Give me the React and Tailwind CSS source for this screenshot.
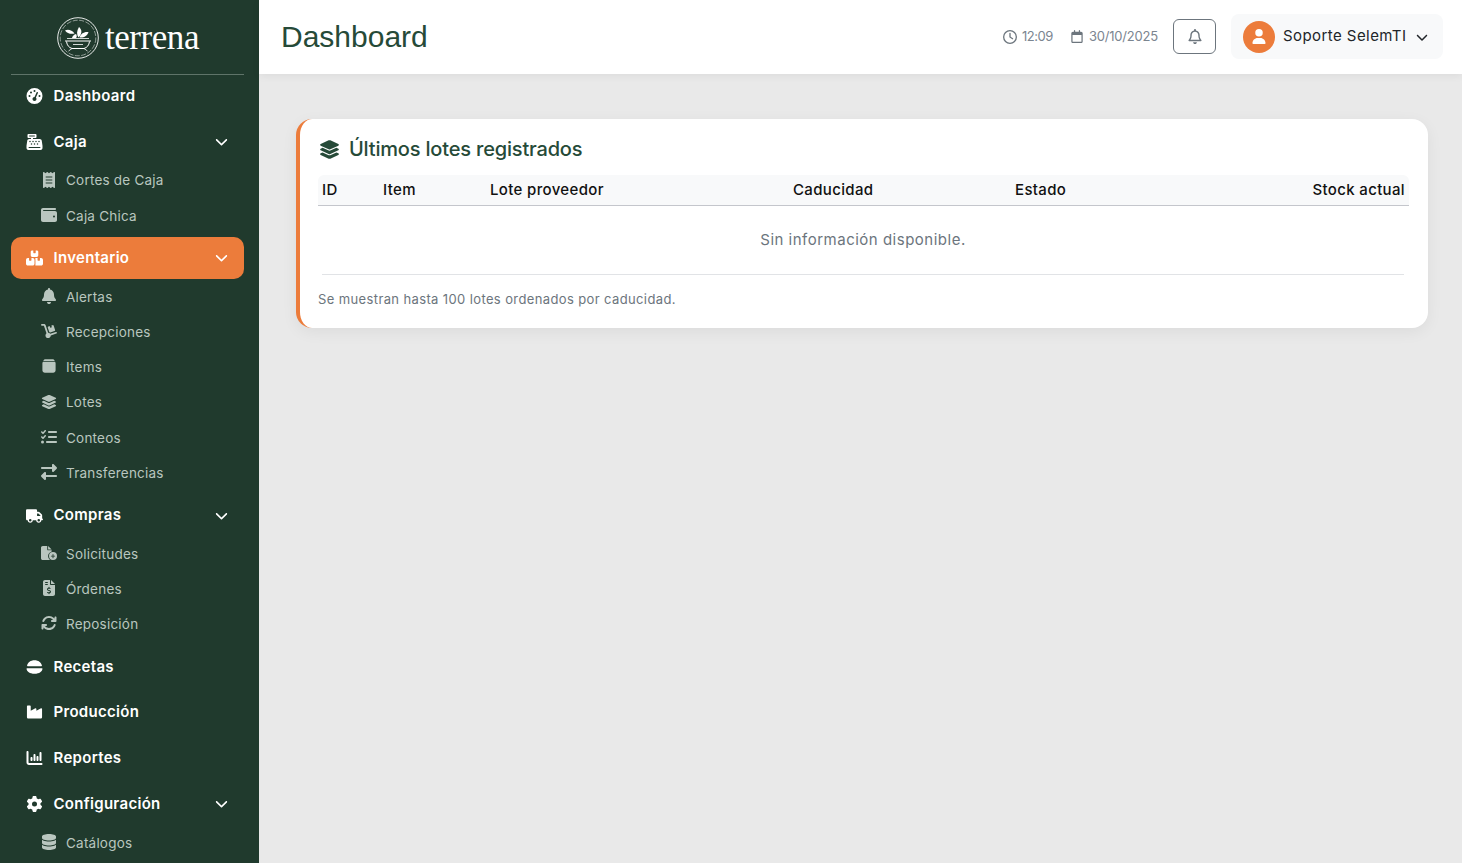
import React from "react";
import {
  FaGaugeHigh, FaCashRegister, FaReceipt, FaWallet, FaBoxesStacked, FaBell, FaDolly,
  FaLayerGroup, FaListCheck, FaRightLeft, FaTruck, FaFileCirclePlus, FaFileInvoiceDollar,
  FaArrowsRotate, FaIndustry, FaChartColumn, FaGear, FaDatabase, FaRegClock, FaRegCalendar,
  FaRegBell, FaChevronDown, FaUser,
} from "react-icons/fa6";

const Burger = ({ className }) => (
  <svg viewBox="0 0 16 14" className={className} fill="currentColor">
    <path d="M1 5.600C1.600 2.600 4.400.6 8 .6s6.400 2 7 5c.1.4-.2.7-.6.7H1.600c-.4 0-.7-.3-.6-.7Z" />
    <path d="M1 8.200h14c.3 0 .5.200.5.500-.3 2.600-2.800 4.700-7.500 4.700S.800 11.300.500 8.700c0-.3.200-.5.500-.5Z" />
  </svg>
);

const Jar = ({ className }) => (
  <svg viewBox="0 0 16 16" className={className} fill="currentColor">
    <path d="M4.500 1.200h7c.9 0 1.600.5 2 1.200l.2.600H2.300l.2-.6c.4-.7 1.100-1.200 2-1.200Z" />
    <path d="M2 3.700h12c.4.400.6 1 .6 1.600v7c0 1.400-1.100 2.500-2.500 2.500H3.900c-1.400 0-2.500-1.100-2.500-2.500v-7c0-.6.200-1.200.6-1.600Z" />
  </svg>
);

const Logo = () => (
  <svg viewBox="0 0 42 42" className="w-[42px] h-[42px] text-white" fill="none" stroke="currentColor">
    <circle cx="21" cy="21" r="20.300" strokeWidth="0.900" />
    <circle cx="21" cy="21" r="17.800" strokeWidth="0.500" strokeDasharray="5 1.500" />
    <path d="M8 24h26M9.500 24.500c.5 4 2.500 6 5.500 7h12c3-1 5-3 5.500-7" strokeWidth="1" />
    <path d="M10 21.500h22M15 31.500l-3.500 2.500M27 31.500l3.500 2.500M16 27.500h10" strokeWidth="0.800" />
    <path d="M8 13.500c3-1.500 7-.5 9.500 3 -3 .8-7.500.3-9.500-3Z" fill="currentColor" stroke="none" />
    <path d="M21.500 20.500c-2-3-2-6.500.5-10.500 3 2.500 3.500 6.500-.5 10.500Z" fill="currentColor" stroke="none" />
    <path d="M22.500 20.500c1-3.500 4-6 9-5.500-1 3.500-4.500 6-9 5.500Z" fill="currentColor" stroke="none" />
    <path d="M15 21c.5-2 2-3.500 4-4 1 1.500 1 3 0 4Z" fill="currentColor" stroke="none" />
  </svg>
);

const Main = ({ icon: Icon, label, active, chevron }) => (
  <div className={`h-[42px] ml-[11px] mr-[15px] pl-[15px] pr-[15px] flex items-center rounded-[10px] ${active ? "bg-[#ec7c3b]" : ""}`}>
    <Icon className="w-[17px] h-[16px] shrink-0 text-white" />
    <span className="ml-[10.500px] text-[15px] font-semibold tracking-[0.300px] text-white">{label}</span>
    {chevron && <FaChevronDown className="ml-auto mr-[1.500px] mb-[1px] w-[13px] h-[13px] text-white" />}
  </div>
);

const Sub = ({ icon: Icon, label }) => (
  <div className="h-[35.200px] pl-[41px] flex items-center text-[#b9c6bf]">
    <span className="w-[16px] mb-[2px] flex justify-center shrink-0"><Icon className="w-[16px] h-[16px]" /></span>
    <span className="ml-[9px] text-[13.500px] tracking-[0.220px]">{label}</span>
  </div>
);

const Group = ({ children, tight }) => <div className={tight ? "mb-[3px]" : "mb-1"}>{children}</div>;

export default function App() {
  return (
    <div className="flex h-screen overflow-hidden bg-[#e9e9e9] font-['Inter',sans-serif]">
      <aside className="w-[259px] shrink-0 bg-[#203a2d] overflow-hidden">
        <div className="h-[75px] ml-[11px] mr-[15px] pt-[2px] pl-[1px] border-b border-[#5f7469] flex items-center justify-center gap-[6px]">
          <Logo />
          <span className="font-['Liberation_Serif',serif] text-[35px] leading-none tracking-[-0.450px] text-white pb-[1px]">terrena</span>
        </div>
        <nav>
          <Group><Main icon={FaGaugeHigh} label="Dashboard" /></Group>
          <Group>
            <Main icon={FaCashRegister} label="Caja" chevron />
            <Sub icon={FaReceipt} label="Cortes de Caja" />
            <Sub icon={FaWallet} label="Caja Chica" />
          </Group>
          <Group>
            <Main icon={FaBoxesStacked} label="Inventario" chevron active />
            <Sub icon={FaBell} label="Alertas" />
            <Sub icon={FaDolly} label="Recepciones" />
            <Sub icon={Jar} label="Items" />
            <Sub icon={FaLayerGroup} label="Lotes" />
            <Sub icon={FaListCheck} label="Conteos" />
            <Sub icon={FaRightLeft} label="Transferencias" />
          </Group>
          <Group>
            <Main icon={FaTruck} label="Compras" chevron />
            <Sub icon={FaFileCirclePlus} label="Solicitudes" />
            <Sub icon={FaFileInvoiceDollar} label="Órdenes" />
            <Sub icon={FaArrowsRotate} label="Reposición" />
          </Group>
          <Group tight><Main icon={Burger} label="Recetas" /></Group>
          <Group><Main icon={FaIndustry} label="Producción" /></Group>
          <Group><Main icon={FaChartColumn} label="Reportes" /></Group>
          <Group>
            <Main icon={FaGear} label="Configuración" chevron />
            <Sub icon={FaDatabase} label="Catálogos" />
          </Group>
        </nav>
      </aside>

      <div className="flex-1 flex flex-col min-w-0">
        <header className="h-[74px] shrink-0 bg-white shadow-[0_2px_8px_rgba(0,0,0,0.06)] flex items-center pl-[22px] pr-[19px] pb-[1px]">
          <h1 className="font-['Liberation_Sans',sans-serif] text-[30px] leading-none text-[#264a38]">Dashboard</h1>
          <div className="ml-auto flex items-center text-[13px] text-[#7b8590] tracking-[-0.200px]">
            <FaRegClock className="w-[14px] h-[14px] text-[#6c757d]" />
            <span className="ml-[5px] tracking-[-0.450px]">12:09</span>
            <FaRegCalendar className="ml-[18px] w-[12px] h-[13px] text-[#6c757d]" />
            <span className="ml-[6px]">30/10/2025</span>
          </div>
          <button className="ml-[15px] w-[43px] h-[35px] rounded-[6px] border border-[#6c757d] flex items-center justify-center">
            <FaRegBell className="w-[14px] h-[15px] text-[#6c757d]" />
          </button>
          <div className="ml-[15px] w-[212px] h-[45px] rounded-[8px] bg-[#f8f9fa] flex items-center pl-[12px]">
            <span className="w-[32px] h-[32px] rounded-full bg-[#ec7c3b] flex items-center justify-center">
              <FaUser className="w-[14px] h-[15px] text-white" />
            </span>
            <span className="ml-[8px] text-[15px] text-[#212529] tracking-[0.430px]">Soporte SelemTI</span>
            <FaChevronDown className="ml-[10px] w-[12px] h-[12px] text-[#212529]" />
          </div>
        </header>

        <main className="flex-1 pt-[45px] pl-[37px] pr-[34px]">
          <section className="bg-white rounded-[16px] border-l-4 border-[#ec7c3b] shadow-[0_4px_16px_rgba(0,0,0,0.06)] pl-[18px] pr-[19px] pt-[15px] pb-[20px] h-[209px]">
            <div className="h-[30px] flex items-center text-[#264a38]">
              <FaLayerGroup className="ml-[1px] w-[21px] h-[21px]" />
              <h2 className="ml-[9px] text-[20px] font-medium tracking-[-0.180px]">Últimos lotes registrados</h2>
            </div>
            <table className="mt-[11px] w-full border-collapse text-[15px] text-[#111] tracking-[0.350px]">
              <thead>
                <tr className="h-[30px] bg-[#f8f9fa] border-b border-[#c4c6cc] text-left">
                  <th className="w-[61px] pl-[4px] font-medium rounded-tl-[6px]">ID</th>
                  <th className="w-[107px] pl-[4px] font-medium">Item</th>
                  <th className="w-[303px] pl-[4px] font-medium">Lote proveedor</th>
                  <th className="w-[222px] pl-[4px] font-medium">Caducidad</th>
                  <th className="pl-[4px] font-medium">Estado</th>
                  <th className="pr-[4px] font-medium text-right rounded-tr-[6px]">Stock actual</th>
                </tr>
              </thead>
              <tbody>
                <tr>
                  <td colSpan={6} className="h-[68px] pl-[4px] pr-[5px] py-0">
                    <div className="h-[69px] pt-[2px] flex items-center justify-center border-b border-[#e1e3e6] text-[15px] font-normal tracking-[0.500px] text-[#6c757d]">Sin información disponible.</div>
                  </td>
                </tr>
              </tbody>
            </table>
            <p className="mt-[15px] text-[13px] tracking-[0.380px] text-[#6c757d]">Se muestran hasta 100 lotes ordenados por caducidad.</p>
          </section>
        </main>
      </div>
    </div>
  );
}
